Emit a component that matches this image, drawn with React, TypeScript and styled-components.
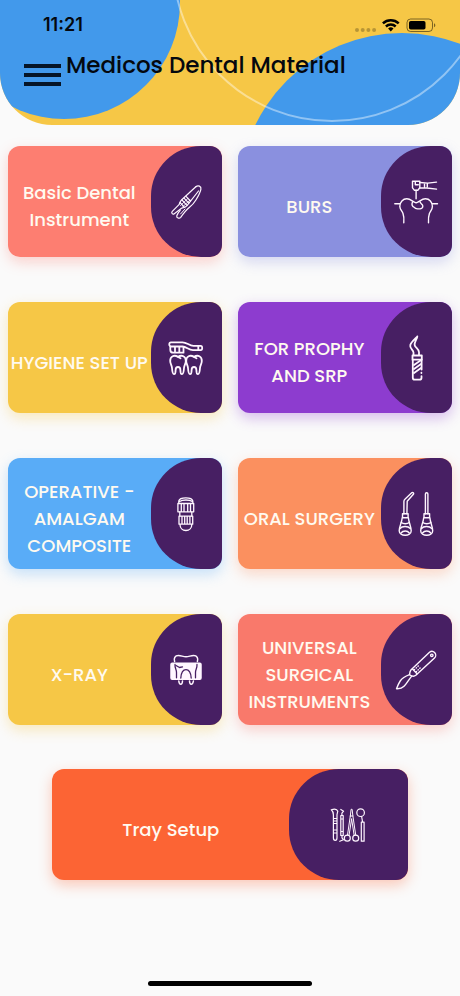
import React from "react";
import styled, { createGlobalStyle } from "styled-components";

const GlobalStyle = createGlobalStyle`
  *, *::before, *::after { box-sizing: border-box; }
  body {
    margin: 0;
    background: #fafafa;
    font-family: Poppins, Inter, sans-serif;
  }
`;

const PLUM = "#471f63";

const Screen = styled.div`
  display: flex;
  flex-direction: column;
  min-height: 100vh;
`;

const Header = styled.header`
  position: relative;
  height: 125px;
  overflow: hidden;
  border-radius: 0 0 52px 52px;
  background: #f6c746;
`;

const HeaderArt = styled.svg`
  position: absolute;
  inset: 0;
  width: 100%;
  height: 100%;
`;

const HeaderContent = styled.div`
  position: relative;
  display: flex;
  flex-direction: column;
`;

const StatusBar = styled.div`
  display: flex;
  align-items: center;
  justify-content: space-between;
  height: 50px;
  padding: 0 24px 0 43px;
`;

const Clock = styled.time`
  font: 600 18px/20px Inter, sans-serif;
  color: #04080f;
`;

const StatusIcons = styled.svg`
  width: 82px;
  height: 16px;
`;

const TitleRow = styled.div`
  display: flex;
  align-items: flex-start;
  gap: 5px;
  padding-left: 24px;
`;

const MenuButton = styled.button`
  display: flex;
  flex-direction: column;
  gap: 5px;
  width: 37px;
  margin-top: 14px;
  padding: 0;
  border: 0;
  background: none;
  cursor: pointer;
`;

const MenuLine = styled.span`
  height: 4px;
  width: 100%;
  background: #061527;
`;

const Title = styled.h1`
  margin: 0;
  font-size: 23px;
  line-height: 30px;
  font-weight: 500;
  color: #04080f;
  white-space: nowrap;
`;

const Main = styled.main`
  display: flex;
  flex-direction: column;
  gap: 44px;
  padding: 21px 8px 24px;
`;

const Grid = styled.div`
  display: grid;
  grid-template-columns: 1fr 1fr;
  gap: 45px 16px;
`;

const Card = styled.button<{ $color: string; $wide?: boolean }>`
  display: grid;
  grid-template-columns: 2fr 1fr;
  align-items: stretch;
  min-width: 0;
  min-height: 111px;
  width: ${(p) => (p.$wide ? "80%" : "100%")};
  align-self: center;
  padding: 0;
  border: 0;
  border-radius: 12px;
  background: ${(p) => p.$color};
  box-shadow: 0 5px 14px ${(p) => p.$color}55;
  font-family: inherit;
  cursor: pointer;
`;

const CardLabel = styled.span`
  display: flex;
  align-items: center;
  justify-content: center;
  min-width: 0;
  padding-top: 9px;
  font-size: 18px;
  line-height: 27px;
  font-weight: 500;
  text-align: center;
  color: #fffaf0;
`;

const CardPanel = styled.span`
  display: flex;
  align-items: center;
  justify-content: center;
  border-radius: 50px 12px 12px 50px;
  background: ${PLUM};
`;

const Glyph = styled.svg`
  width: 48px;
  height: 48px;
  fill: none;
  stroke: #fff6ff;
  stroke-linecap: round;
  stroke-linejoin: round;
`;

const homeWidth = 164;

const HomeIndicator = styled.div`
  width: ${homeWidth}px;
  height: 5px;
  margin: auto auto 10px;
  border-radius: 3px;
  background: #000;
`;

const icons = {
  tweezers: (
    <g strokeWidth="1.2">
      <path d="M33.800 8.800c2.300-2 5.700-.6 5.100 2.300-.6 3.600-2.700 7.200-5 10.900-1.600 2.700-3.600 5-6.400 7.200-2.700 2.200-6.300 6.600-8.800 10.100-1.300 1.700-4.500.7-3.900-1.500.8-2.400 2.200-4.200 3.400-5.500" />
      <path d="M33.800 8.800L19.500 22c-1.700 1.600-1.700 3.200-2.500 4.700l-6.700 6.700c-1.500 1.700.5 3.500 2 2.300l7.500-5.600c2.400-.2 4-.8 5.200-2.400L36.500 13" />
      <path d="M20 22l5 5.300M22 20.200l4.800 5M24 18.300l4.500 4.700M18 24.500l4.500 4.800" />
      <path d="M18.500 27.500l7.300-7M20.500 29l7.300-6.800" strokeWidth=".9" />
      <path d="M23 31l-4.500 5" strokeWidth="1" />
    </g>
  ),
  bur: (
    <g strokeWidth="1.400">
      <path d="M20.500 3.300h7.300v6.500l-2 2.400h-3.500l-1.800-2.400zM23.300 3.500v3.300h3" />
      <path d="M27.800 4.500l8 .6 8.700-1M27.800 10h7l9.700 1.100M32.500 5.400v3.400M35.300 5.400v3.400" />
      <path d="M24.100 12.300v8.500" />
      <path d="M2.800 25.800h5.400M40.200 25.800h5.300" />
      <path d="M11.800 44.700c.3-3.500 0-7-.8-9.200-1-2.500-3-4-3.200-7 0-4.500 3.200-7.700 7-7.700 4 0 5.500 2.800 9.300 4 3.800-1.200 5.300-4 9.300-4 4 0 7 3.200 7 7.700 0 3-2 4.500-3 7-.8 2.200-1.100 5.700-.9 9.200" />
      <path d="M20.500 24c-1 2.500-.5 4.500 1.800 5.300 1.200 1.800 5 2 7.300 1 1.800-1 1.500-3.500-.2-4.500-.8-.7-1-1.300-1.400-2" />
    </g>
  ),
  brush: (
    <g strokeWidth="1.800">
      <path d="M9 8.300h11.500c4.500 0 6.500 3.500 11 3.500h7.200c2 0 2 4.300 0 4.300H31c-4.500 0-6.500-3.600-10.500-3.600H9c-2.300 0-2.300-4.200 0-4.200z" />
      <path d="M8.300 12.500v3.200c0 2 1.200 3 3 3h10.200v-5.800M13 12.800v5.700M17.300 12.800v5.700M36.300 12v4" />
      <path d="M8.200 27c-.2-5 4-6.300 7.800-4.300 3.800-2 8-.7 7.800 4.300 0 3-1.600 4-1.800 7-.2 3-.6 6.200-2 6.200s-1.600-1.700-1.600-4c0-2.200-.9-3.200-2.400-3.200s-2.400 1-2.400 3.200c0 2.300-.2 4-1.600 4s-1.800-3.200-2-6.200c-.2-3-1.800-4-1.800-7z" />
      <path d="M24.200 27c-.2-5 4-6.300 7.800-4.300 3.800-2 8-.7 7.800 4.300 0 3-1.600 4-1.800 7-.2 3-.6 6.200-2 6.200s-1.600-1.700-1.600-4c0-2.200-.9-3.200-2.400-3.200s-2.400 1-2.400 3.200c0 2.300-.2 4-1.600 4s-1.800-3.200-2-6.200c-.2-3-1.800-4-1.800-7z" />
      <path d="M15.500 22.800l3 1.500M31.500 22.800l3 1.500" />
    </g>
  ),
  scaler: (
    <g strokeWidth="1.800">
      <path d="M25.300 2.500c-2.300 2.500-6 5.500-7 8.500-1 3.500 3 4.500 3.200 7.500v2.700M25.300 2.500c-.6 3-3 5.500-2.700 8.300.4 2.800 4.200 3.700 4.400 7.400v3" />
      <path d="M20.500 21.500h9.300v4.200h-9.300z" />
      <path d="M20.800 25.700v18c0 1.300.8 2 2 2h4.700c1.300 0 2-.8 2-2v-1.500M29.600 25.700v9.800M29.400 38.700v.3" />
      <path d="M22 31l6.800-4.700M22 35l7-5M22 39l7-5" />
    </g>
  ),
  composite: (
    <g strokeWidth="1.300">
      <path d="M16.800 13.300v-2.500c1-4 13-4 14 0v2.500M17.500 11.500c3-2 10-2 12.800 0" />
      <path d="M15.900 13.500h15.800v8.300H15.900zM19.300 13.700v8M22 13.700v8M25.700 13.700v8M28.500 13.700v8" />
      <path d="M17.800 22v4M29.800 22v4" />
      <path d="M17 26.200h13.700v8H17zM20 26.400v7.700M22.700 26.400v7.700M25.200 26.400v7.700M27.900 26.400v7.700" />
      <path d="M18 34.500c0 3.500 2.500 6 5.900 6s5.900-2.500 5.900-6" />
    </g>
  ),
  surgery: (
    <g strokeWidth="1.400">
      <path d="M11.900 23.700V11.500c0-1 .3-1.700 1-2.300l6.800-6.400c1-.9 2.600.5 1.700 1.500l-6.200 6.900-.3 12.500" />
      <path d="M33.400 23.700V4c0-1.700 2.500-1.700 2.500 0v19.700" />
      {[0, 21.500].map((dx) => (
        <g key={dx} transform={`translate(${dx} 0)`}>
          <path d="M10.500 23.800h5.600v4h-5.600zM10.200 27.800h6.200c.3 4.500 2.800 9 2.800 13 0 6-12 6-12 0 0-4 2.700-8.500 3-13z" />
          <path d="M9.300 32.500c2 1.600 6 1.600 8 0M8 38.500c2-2.600 8-2.600 10.300 0M9 43c2-2.600 6.500-2.600 8.300 0" />
        </g>
      ))}
    </g>
  ),
  xray: (
    <g strokeWidth="1.500">
      <path d="M12.600 15.500c-1-3 .2-6 3.800-6 3 0 4.500 1.300 7.600 1.300s4.600-1.300 7.600-1.300c3.600 0 4.800 3 3.800 6" />
      <rect x="9" y="17.200" width="30" height="16" rx="1.200" fill="#fff6ff" />
      <path d="M16.800 35c.2 1.800.8 3.300 2 3.300s1.600-1.600 1.700-3.300M27.500 35c.1 1.700.5 3.300 1.700 3.300s1.900-1.500 2.200-3.300" />
      <g stroke={PLUM} strokeWidth="1.300">
        <path d="M13 18.500c-.3 3.500 1.600 5 1.500 8v5.300M35 18.500c.3 3.500-1.600 5-1.500 8v5.300" />
        <path d="M18.800 32c.3-4 1.800-8.300 5.200-8.300S28.900 28 29.200 32M14 19.500l3.500 2 3-.7" />
      </g>
    </g>
  ),
  scalpel: (
    <g strokeWidth="1.400">
      <path d="M37.500 6.300c1.500-1.300 3.700-1.200 5.100.2 1.500 1.600 1.500 4.100-.1 5.600L23.800 29.300c-1.900 1.500-4 1-6.300-.6.200-2 .4-3.500 1.400-4.700z" />
      <circle cx="39.800" cy="9.300" r="1.200" />
      <path d="M17.500 28.700c-4 1.500-7.300 3.300-9.300 6.300-1.600 2.500-2.700 5.200-3.700 7.700 3 .2 5.600-.5 7.500-2.400 2.800-2.800 4.800-6.800 7.700-10.200" />
      <path d="M20.500 23l4.500 4.800M22.300 23.800l.3-.3M24.200 22l.3-.3M26 20.200l.3-.3M24.200 25.800l.3-.3M26 24l.3-.3M27.800 22.200l.3-.3" />
    </g>
  ),
  tray: (
    <g strokeWidth="1.200">
      <path d="M7.300 8.700c2.500-.8 5.700-.8 6.500 1.500l-.8 3.500v23c0 3.500-3.600 3.500-3.600 0v-23c.2-2-.2-3.200-2.100-5zM9.500 17.500H13M9.500 20H13M9.500 22.500H13M9.500 29H13M9.500 32H13" />
      <path d="M16.800 8.500l2.800 1.700-1.700 2v2.300M16.800 14.500h2.400v20h-2.400zM16.800 18h2.400M16.800 30.500h2.400M18 34.500v2.300l1.500 2-3.700 1.500" />
      <path d="M26.300 15l.8-6.700h1l.8 6.700 2.800 19M26.300 15h2.600M26.300 15l-2.800 19M27.600 18L25 34.500M27.600 18l2.600 16.500" strokeWidth="1" />
      <circle cx="23.300" cy="37.200" r="3" />
      <circle cx="31.700" cy="37.200" r="3" />
      <circle cx="36.600" cy="11.700" r="3.800" />
      <path d="M37.600 15.500l1 5.500M37.300 21.200h2.800v19h-2.800z" />
    </g>
  ),
};

type IconName = keyof typeof icons;

const categories: { label: string; color: string; icon: IconName }[] = [
  { label: "Basic Dental Instrument", color: "#fd7e71", icon: "tweezers" },
  { label: "BURS", color: "#8a90df", icon: "bur" },
  { label: "HYGIENE SET UP", color: "#f6c746", icon: "brush" },
  { label: "FOR PROPHY AND SRP", color: "#8d3ccf", icon: "scaler" },
  { label: "OPERATIVE - AMALGAM COMPOSITE", color: "#59acf7", icon: "composite" },
  { label: "ORAL SURGERY", color: "#fb905f", icon: "surgery" },
  { label: "X-RAY", color: "#f6c746", icon: "xray" },
  { label: "UNIVERSAL SURGICAL INSTRUMENTS", color: "#f9796b", icon: "scalpel" },
];

function CategoryCard(props: { label: string; color: string; icon: IconName; wide?: boolean }) {
  return (
    <Card type="button" $color={props.color} $wide={props.wide}>
      <CardLabel>{props.label}</CardLabel>
      <CardPanel>
        <Glyph viewBox="0 0 48 48" aria-hidden="true">
          {icons[props.icon]}
        </Glyph>
      </CardPanel>
    </Card>
  );
}

export default function App() {
  return (
    <Screen>
      <GlobalStyle />
      <Header>
        <HeaderArt viewBox="0 0 460 125" preserveAspectRatio="xMidYMid slice" aria-hidden="true">
          <circle cx="64" cy="3" r="116" fill="#4299eb" />
          <circle cx="402" cy="196" r="163" fill="#4299eb" />
          <circle cx="332" cy="-38" r="159" fill="none" stroke="#fff" strokeOpacity=".42" strokeWidth="2" />
        </HeaderArt>
        <HeaderContent>
          <StatusBar>
            <Clock>11:21</Clock>
            <StatusIcons viewBox="0 0 82 16" aria-hidden="true">
              <g fill="#000" fillOpacity=".25">
                <circle cx="3" cy="13" r="2" />
                <circle cx="8.700" cy="13" r="2" />
                <circle cx="14.400" cy="13" r="2" />
                <circle cx="20.100" cy="13" r="2" />
              </g>
              <g fill="none" stroke="#000" strokeWidth="2.500">
                <path d="M28.900 6.300a11.600 11.600 0 0 1 15.800 0" />
                <path d="M31.900 9.500a7.300 7.300 0 0 1 9.800 0" />
              </g>
              <path d="M36.800 14.500l-2.700-2.900a4 4 0 0 1 5.400 0z" />
              <rect x="53" y="2" width="25.500" height="12.500" rx="3.600" fill="none" stroke="#000" strokeOpacity=".5" />
              <rect x="55" y="4" width="16.500" height="8.500" rx="1.800" />
              <path d="M80 6.200c1.800.7 1.800 3.400 0 4.100z" fillOpacity=".5" />
            </StatusIcons>
          </StatusBar>
          <TitleRow>
            <MenuButton type="button" aria-label="Open menu">
              <MenuLine />
              <MenuLine />
              <MenuLine />
            </MenuButton>
            <Title>Medicos Dental Material</Title>
          </TitleRow>
        </HeaderContent>
      </Header>
      <Main>
        <Grid>
          {categories.map((c) => (
            <CategoryCard key={c.label} {...c} />
          ))}
        </Grid>
        <CategoryCard label="Tray Setup" color="#fc6434" icon="tray" wide />
      </Main>
      <HomeIndicator />
    </Screen>
  );
}
